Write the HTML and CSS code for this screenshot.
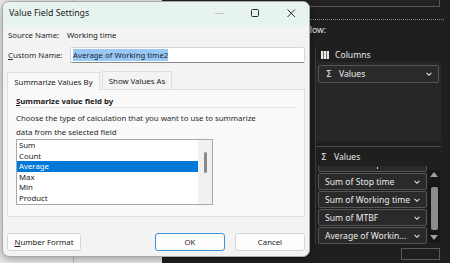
FILE: index.html
```html
<!DOCTYPE html>
<html lang="en">
<head>
    <meta charset="UTF-8">
    <meta name="viewport" content="width=device-width, initial-scale=1.0">
    <title>Value Field Settings</title>
    <link rel="stylesheet" href="styles.css">
</head>
<body>
    <div class="screen">
        <div class="sheet"></div>

        <aside class="pane">
            <div class="field-box"></div>
            <div class="dots"></div>
            <div class="drag-hint">Drag fields between areas below:</div>
            <div class="areas">
                <div class="area-col"></div>
                <div class="area-col right">
                    <div class="area-head">
                        <svg class="cols-icon" width="8" height="8" viewBox="0 0 8 8">
                            <rect x="0" y="0" width="8" height="8" fill="#e8e8e8"/>
                            <rect x="2" y="0" width="1" height="8" fill="#6a6a6a"/>
                            <rect x="5" y="0" width="1" height="8" fill="#6a6a6a"/>
                        </svg>
                        <span>Columns</span>
                    </div>
                    <div class="area-box">
                        <div class="chip">
                            <span class="sigma">Σ</span>
                            <span class="chip-text">Values</span>
                            <svg class="chev" width="6" height="4" viewBox="0 0 6 4"><path d="M0.5 0.8 L3 3.2 L5.5 0.8" fill="none" stroke="#d8d8d8" stroke-width="1.1"/></svg>
                        </div>
                    </div>
                    <div class="area-sep"></div>
                    <div class="area-head values-head">
                        <span class="sigma head-sigma">Σ</span>
                        <span>Values</span>
                    </div>
                    <div class="values-box">
                        <div class="chip-list">
                            <!-- scrolled past: only the bottom of this chip shows -->
                            <div class="chip partial"><span class="tick"></span></div>
                            <div class="chip">
                                <span class="chip-text">Sum of Stop time</span>
                                <svg class="chev" width="6" height="4" viewBox="0 0 6 4"><path d="M0.5 0.8 L3 3.2 L5.5 0.8" fill="none" stroke="#d8d8d8" stroke-width="1.1"/></svg>
                            </div>
                            <div class="chip">
                                <span class="chip-text">Sum of Working time</span>
                                <svg class="chev" width="6" height="4" viewBox="0 0 6 4"><path d="M0.5 0.8 L3 3.2 L5.5 0.8" fill="none" stroke="#d8d8d8" stroke-width="1.1"/></svg>
                            </div>
                            <div class="chip">
                                <span class="chip-text">Sum of MTBF</span>
                                <svg class="chev" width="6" height="4" viewBox="0 0 6 4"><path d="M0.5 0.8 L3 3.2 L5.5 0.8" fill="none" stroke="#d8d8d8" stroke-width="1.1"/></svg>
                            </div>
                            <div class="chip">
                                <span class="chip-text">Average of Workin...</span>
                                <svg class="chev" width="6" height="4" viewBox="0 0 6 4"><path d="M0.5 0.8 L3 3.2 L5.5 0.8" fill="none" stroke="#d8d8d8" stroke-width="1.1"/></svg>
                            </div>
                        </div>
                        <div class="vscroll">
                            <svg width="8" height="5" viewBox="0 0 8 5"><path d="M0 5 L4 0 L8 5 Z" fill="#a0a0a0"/></svg>
                            <div class="vthumb"></div>
                            <svg width="8" height="5" viewBox="0 0 8 5"><path d="M0 0 L4 5 L8 0 Z" fill="#a0a0a0"/></svg>
                        </div>
                    </div>
                </div>
            </div>
            <div class="pane-foot">
                <span class="defer-box"></span>
                <span class="update-btn"></span>
            </div>
        </aside>

        <div class="dialog">
            <div class="titlebar">
                <span class="title">Value Field Settings</span>
                <div class="win-btns">
                    <span class="win-btn"><svg width="9" height="9" viewBox="0 0 9 9"><path d="M0 4.5 H9" stroke="#c4c4c4" stroke-width="1"/></svg></span>
                    <span class="win-btn"><svg width="9" height="9" viewBox="0 0 9 9"><rect x="0.5" y="0.5" width="7" height="7" rx="1" fill="none" stroke="#2a2a2a" stroke-width="1"/></svg></span>
                    <span class="win-btn"><svg width="9" height="9" viewBox="0 0 9 9"><path d="M0.5 0.5 L8 8 M8 0.5 L0.5 8" stroke="#2a2a2a" stroke-width="1"/></svg></span>
                </div>
            </div>

            <div class="dlg-body">
                <div class="info-row">
                    <span class="lbl">Source Name:</span>
                    <span>Working time</span>
                </div>
                <div class="name-row">
                    <label class="lbl" for="customName"><u>C</u>ustom Name:</label>
                    <div class="name-input" id="customName"><span class="sel">Average of Working time2</span></div>
                </div>

                <div class="tabs">
                    <span class="tab active">Summarize Values By</span>
                    <span class="tab">Show Values As</span>
                </div>
                <div class="tab-panel">
                    <div class="panel-head"><u>S</u>ummarize value field by</div>
                    <p class="desc">Choose the type of calculation that you want to use to summarize<br>data from the selected field</p>
                    <div class="listbox">
                        <ul class="list-items">
                            <li>Sum</li>
                            <li>Count</li>
                            <li class="selected">Average</li>
                            <li>Max</li>
                            <li>Min</li>
                            <li>Product</li>
                        </ul>
                        <div class="list-scroll"><div class="list-thumb"></div></div>
                    </div>
                </div>

                <div class="btn-row">
                    <button class="btn fmt"><u>N</u>umber Format</button>
                    <span class="spacer"></span>
                    <button class="btn ok">OK</button>
                    <button class="btn">Cancel</button>
                </div>
            </div>
        </div>
    </div>
</body>
</html>
```

FILE: styles.css
```css
body {
    margin: 0;
    font-family: "Noto Sans", sans-serif;
    font-size: 7.8px;
    color: #1a1a1a;
}
.screen {
    position: relative;
    display: flex;
    width: 450px;
    height: 263px;
    overflow: hidden;
    background: #1f1f1f;
}
.sheet {
    width: 162px;
    background-color: #e9e9e9;
    background-image: linear-gradient(to right, transparent 73px, #bdbdbd 73px, #bdbdbd 74px, transparent 74px);
}

/* pivot table field pane */
.pane {
    width: 288px;
    display: flex;
    flex-direction: column;
    background: #1f1f1f;
    color: #e6e6e6;
    font-size: 8.6px;
}
.field-box {
    height: 6px;
    margin: 0 10px 0 8px;
    background: #222;
    border-right: 1px solid #555;
    border-bottom: 1px solid #555;
}
.dots {
    margin: 12px 6px 0 8px;
    border-top: 1px dotted #8a8a8a;
}
.drag-hint {
    width: 164px;
    margin-top: 3px;
    line-height: 14px;
    text-align: right;
    white-space: nowrap;
}
.areas {
    display: grid;
    grid-template-columns: 153px 126px;
    margin-top: 10px;
    height: 197px;
}
.area-col.right {
    border-left: 1px solid #3e3e3e;
    display: flex;
    flex-direction: column;
}
.area-head {
    display: flex;
    align-items: center;
    height: 15px;
    padding-left: 5px;
    gap: 6px;
}
.area-box {
    height: 74px;
    padding: 3px 2px;
    background: #272727;
}
.chip {
    display: flex;
    align-items: center;
    height: 16px;
    padding: 0 6px;
    border: 1px solid #555;
    border-radius: 2px;
    background: #2a2a2a;
    color: #ececec;
}
.area-box .chip {
    padding-left: 7px;
}
.sigma {
    font-family: "DejaVu Sans", sans-serif;
    font-size: 9px;
    width: 13px;
}
.head-sigma {
    width: 7px;
}
.chip-text {
    flex: 1;
    white-space: nowrap;
    overflow: hidden;
}
.chev {
    flex: none;
}
.area-sep {
    margin-top: 4px;
    border-top: 1px solid #4a4a4a;
}
.values-head {
    height: 19px;
}
.values-box {
    display: flex;
    height: 78px;
    overflow: hidden;
}
.chip-list {
    width: 109px;
    margin-left: 2px;
    margin-top: -11px;
}
.chip-list .chip {
    height: 15px;
    margin-bottom: 1px;
    padding: 0 6px;
}
.chip.partial {
    align-items: flex-end;
}
.tick {
    width: 1px;
    height: 2px;
    margin: 0 0 2px 52px;
    background: #cfcfcf;
}
.vscroll {
    width: 12px;
    margin: 4px 0 2px 1px;
    background: #171717;
    display: flex;
    flex-direction: column;
    align-items: center;
    padding-top: 2px;
}
.vthumb {
    width: 7px;
    height: 43px;
    margin: 10px 0 5px;
    background: #8c8c8c;
    border-radius: 2px;
}
.pane-foot {
    display: flex;
    align-items: flex-start;
    padding-top: 4px;
    padding-left: 6px;
}
.defer-box {
    width: 5px;
    height: 6px;
    background: #555;
}
.update-btn {
    margin-left: auto;
    margin-right: 10px;
    width: 37px;
    height: 10px;
    border: 1px solid #5a5a5a;
}

/* dialog window */
.dialog {
    position: absolute;
    left: 2px;
    top: 1px;
    width: 308px;
    height: 256px;
    box-sizing: border-box;
    border: 1px solid #a9a9a9;
    border-radius: 7px;
    background: #f3f3f3;
    box-shadow: 0 2px 8px rgba(0, 0, 0, 0.35);
    overflow: hidden;
    display: flex;
    flex-direction: column;
}
.titlebar {
    height: 24px;
    display: flex;
    align-items: center;
    background: #e6f3ef;
    padding-left: 6px;
}
.title {
    font-size: 8.8px;
    padding-bottom: 2px;
    color: #1a1a1a;
}
.win-btns {
    margin-left: auto;
    display: flex;
    padding-bottom: 2px;
}
.win-btn {
    width: 36px;
    display: flex;
    justify-content: center;
}
.dlg-body {
    padding: 0 4px;
    display: flex;
    flex-direction: column;
}
.info-row {
    margin-top: 2px;
    height: 14px;
    line-height: 14px;
    padding-left: 1px;
    display: flex;
}
.lbl {
    width: 59px;
    flex: none;
    color: #2a2a2a;
}
.name-row {
    margin-top: 5px;
    display: flex;
    align-items: center;
    padding-left: 1px;
}
.name-row .lbl {
    width: 62px;
}
.name-input {
    flex: 1;
    height: 14px;
    border: 1px solid #d6d6d6;
    border-bottom-color: #8a8a8a;
    border-radius: 2px;
    background: #fff;
    line-height: 14px;
    padding-left: 2px;
}
.sel {
    background: #9bc8f2;
    color: #10233a;
    padding: 1px 0;
}
.tabs {
    margin-top: 8px;
    display: flex;
    gap: 2px;
    height: 18px;
}
.tab {
    display: flex;
    align-items: center;
    justify-content: center;
    box-sizing: border-box;
    border: 1px solid #dedede;
    border-bottom: none;
    background: #f3f3f3;
    white-space: nowrap;
}
.tab.active {
    width: 93px;
    background: #f9f9f9;
    position: relative;
    top: 1px;
}
.tab:not(.active) {
    width: 70px;
}
.tab-panel {
    height: 128px;
    box-sizing: border-box;
    border: 1px solid #e1e1e1;
    background: #f9f9f9;
    padding: 5px 7px 0 8px;
}
.panel-head {
    font-weight: bold;
    line-height: 12px;
    border-bottom: 1px solid #e3e3e3;
}
.desc {
    margin: 3px 0 0;
    line-height: 14px;
    color: #2a2a2a;
}
.listbox {
    width: 197px;
    height: 66px;
    box-sizing: border-box;
    border: 1px solid #a7a7a7;
    background: #fff;
    display: flex;
    overflow: hidden;
}
.list-items {
    flex: 1;
    margin: 0;
    padding: 0;
    list-style: none;
}
.list-items li {
    height: 10.6px;
    line-height: 10.6px;
    padding-left: 2px;
}
.list-items li.selected {
    background: #0078d7;
    color: #fff;
}
.list-scroll {
    width: 14px;
    background: #f1f1f1;
    display: flex;
    justify-content: center;
}
.list-thumb {
    width: 3px;
    height: 21px;
    margin-top: 12px;
    border-radius: 2px;
    background: #8a8a8a;
}
.btn-row {
    margin-top: 16px;
    display: flex;
    gap: 10px;
}
.spacer {
    flex: 1;
}
.btn {
    height: 18px;
    width: 70px;
    padding: 0;
    font-family: inherit;
    font-size: 7.8px;
    color: #1c1c1c;
    background: #fdfdfd;
    border: 1px solid #d5d5d5;
    border-radius: 3px;
}
.btn.fmt {
    width: 74px;
}
.btn.ok {
    border-color: #3d8fd9;
}
```
